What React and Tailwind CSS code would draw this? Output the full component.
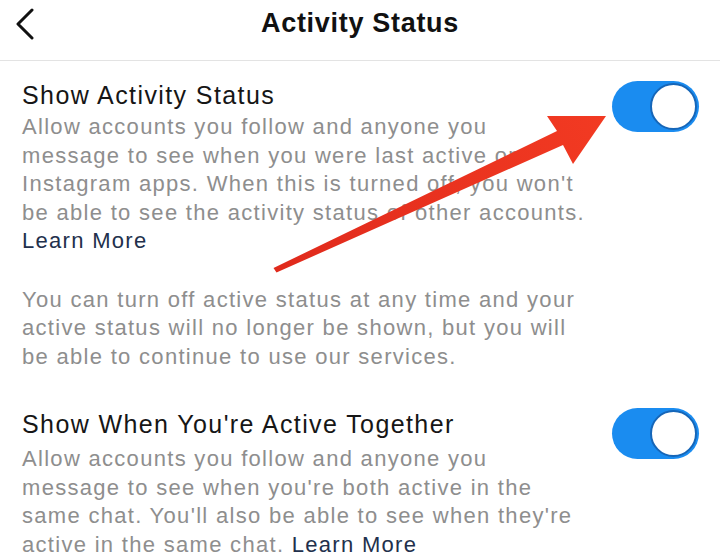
import React from 'react';

function Toggle() {
  return (
    <div className="flex h-[51px] w-[87px] shrink-0 items-center justify-end rounded-full bg-[#1a8cf0] p-[2px]">
      <div className="h-[47px] w-[47px] rounded-full border-[2px] border-[#1666b8] bg-white" />
    </div>
  );
}

function Arrow() {
  return (
    <svg className="pointer-events-none absolute left-0 top-0" width="720" height="559" viewBox="0 0 720 559">
      <defs>
        <linearGradient id="arrowRed" x1="275" y1="270" x2="605" y2="117" gradientUnits="userSpaceOnUse">
          <stop offset="0" stopColor="#e02a1c" />
          <stop offset="1" stopColor="#f23a22" />
        </linearGradient>
      </defs>
      <polygon
        points="273.5,268 557,131 547,116 606,116 573,164 563,145 276.5,272.5"
        fill="url(#arrowRed)"
      />
    </svg>
  );
}

export default function App() {
  return (
    <div className="relative h-[559px] w-[720px] overflow-hidden bg-white font-['Liberation_Sans',Arial,sans-serif]">
      {/* Header */}
      <div className="flex h-[61px] items-center border-b border-[#e3e3e3] pb-[13px]">
        <div className="flex w-[60px] items-center pl-[15px]">
          <svg width="20" height="32" viewBox="0 0 20 32" fill="none">
            <path d="M17 2 L3 16 L17 30" stroke="#111" strokeWidth="3" strokeLinecap="round" strokeLinejoin="round" />
          </svg>
        </div>
        <h1 className="flex-1 text-center text-[27px] font-bold leading-none tracking-[0.7px] text-[#111]">
          Activity Status
        </h1>
        <div className="w-[60px]" />
      </div>

      {/* Show Activity Status */}
      <div className="flex justify-between pl-[22px] pr-[21px] pt-[19px]">
        <div>
          <div className="text-[25px] leading-[30px] tracking-[1.4px] text-[#161616]">Show Activity Status</div>
          <p className="mt-[3px] whitespace-nowrap text-[22px] leading-[28.5px] tracking-[1.3px] text-[#8e8e8e]">
            Allow accounts you follow and anyone you
            <br />
            message to see when you were last active on
            <br />
            Instagram apps. When this is turned off, you won't
            <br />
            be able to see the activity status of other accounts.
            <br />
            <span className="text-[#22304c]">Learn More</span>
          </p>
        </div>
        <div className="pt-[1px]">
          <Toggle />
        </div>
      </div>

      <p className="mt-[30px] whitespace-nowrap px-[22px] text-[22px] leading-[28.5px] tracking-[1.3px] text-[#8e8e8e]">
        You can turn off active status at any time and your
        <br />
        active status will no longer be shown, but you will
        <br />
        be able to continue to use our services.
      </p>

      {/* Show When You're Active Together */}
      <div className="mt-[38px] flex justify-between pl-[22px] pr-[21px]">
        <div>
          <div className="whitespace-nowrap text-[25px] leading-[30px] tracking-[1.4px] text-[#161616]">
            Show When You're Active Together
          </div>
          <p className="mt-[6px] whitespace-nowrap text-[22px] leading-[28.5px] tracking-[1.3px] text-[#8e8e8e]">
            Allow accounts you follow and anyone you
            <br />
            message to see when you're both active in the
            <br />
            same chat. You'll also be able to see when they're
            <br />
            active in the same chat. <span className="text-[#22304c]">Learn More</span>
          </p>
        </div>
        <div className="-mt-[1px]">
          <Toggle />
        </div>
      </div>

      <Arrow />
    </div>
  );
}
